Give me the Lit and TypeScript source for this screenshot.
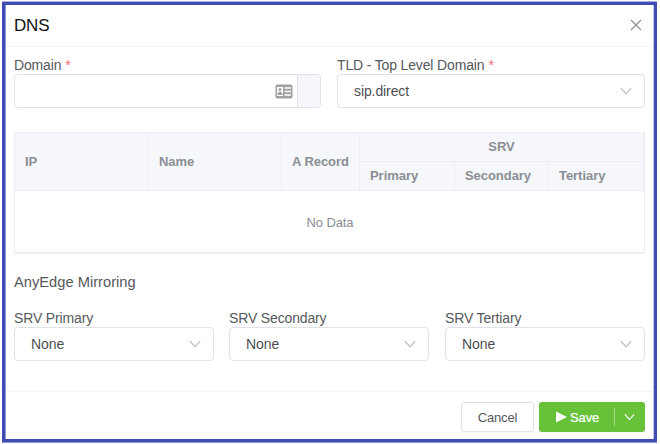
import { LitElement, html, css, svg } from "lit";
import { customElement, property } from "lit/decorators.js";

const chevron = (cls: string, width = 12) => html`<svg class=${cls} width=${width} height="8" viewBox="0 0 12 8">
  ${svg`<path d="M0.8 1.2 L6 6.6 L11.2 1.2" fill="none" stroke="currentColor" stroke-width="1.2"/>`}
</svg>`;

@customElement("select-field")
class SelectField extends LitElement {
  @property() label = "";
  @property() value = "";
  @property({ type: Boolean }) required = false;

  static styles = css`
    :host { display: block; min-width: 0; }
    .label { height: 18px; line-height: 18px; font-size: 14px; letter-spacing: -0.15px; color: #56585c; white-space: nowrap; }
    .star { color: #f56c6c; margin-left: 4px; }
    .box {
      box-sizing: border-box; height: 34px; display: flex; align-items: center;
      justify-content: space-between; padding: 0 12px 0 16px;
      border: 1px solid #dfe2e9; border-radius: 4px; background: #fff;
      font-size: 14px; letter-spacing: -0.1px; color: #4c4e52;
    }
    .arrow { color: #b9bdc6; }
  `;

  render() {
    return html`
      <div class="label">${this.label}${this.required ? html`<span class="star">*</span>` : ""}</div>
      <div class="box"><span>${this.value}</span>${chevron("arrow")}</div>
    `;
  }
}

@customElement("app-root")
class AppRoot extends LitElement {
  static styles = css`
    :host {
      display: block; box-sizing: border-box; width: 660px; height: 444px;
      padding: 2px 3px 2px 2px; background: #fff;
      font-family: "Liberation Sans", Arial, sans-serif; font-size: 14px; color: #56585c;
    }
    .dialog {
      box-sizing: border-box; width: 655px; height: 440px; border: 3px solid #3f4db5;
      box-shadow: 0 -1px #a9afdc, 0 1px #8f97d2, inset 1px 0 #8f97d2, inset -1px 0 #c5c9e8;
      display: flex; flex-direction: column;
    }
    .header {
      box-sizing: border-box; height: 42px; margin: 0 1px; padding: 0 11px 0 8px;
      border-bottom: 1px solid #ecf5fc; display: flex; align-items: center; justify-content: space-between;
    }
    .title { font-size: 17px; line-height: 20px; letter-spacing: -0.2px; color: #111; }
    .close { color: #8b8f96; margin-top: -2px; }
    .body { flex: 1; padding: 9px 10px 0 9px; }
    .row { display: grid; grid-template-columns: 307px 308px; column-gap: 16px; }
    .row.three { grid-template-columns: 200px 200px 200px; column-gap: 0; justify-content: start; }
    .row.three { grid-template-columns: 215px 216px 200px; }
    .row.three select-field { width: 200px; }
    .label { height: 18px; line-height: 18px; letter-spacing: -0.15px; white-space: nowrap; }
    .star { color: #f56c6c; margin-left: 4px; }
    .input {
      box-sizing: border-box; height: 34px; display: flex; border: 1px solid #dfe2e9;
      border-radius: 4px; overflow: hidden;
    }
    .entry { flex: 1; display: flex; align-items: center; justify-content: flex-end; padding-right: 4px; }
    .append { width: 22px; background: #f5f7fa; border-left: 1px solid #dfe2e9; }
    .table {
      margin-top: 24px; width: 631px; height: 122px; box-sizing: border-box;
      border: 1px solid #ebeef5; border-bottom-width: 2px; font-size: 13px; color: #8b8e94;
      display: grid; grid-template-rows: 29px 29px 1fr;
      grid-template-columns: 134px 133px 78px 95px 94px 1fr;
    }
    .th {
      box-sizing: border-box; background: #f5f7fa; border-right: 1px solid #ebeef5;
      border-bottom: 1px solid #ebeef5; padding: 0 0 1px 10px; font-weight: 700; letter-spacing: -0.05px;
      display: flex; align-items: center; white-space: nowrap;
    }
    .tall { grid-row: span 2; }
    .wide { grid-column: span 3; justify-content: center; padding: 0 0 1px; }
    .empty {
      grid-column: 1 / -1; display: flex; align-items: center; justify-content: center;
      padding: 1px 0 0 1px; letter-spacing: -0.1px;
    }
    .section { margin: 18px 0 17px; height: 20px; line-height: 20px; font-size: 14.7px; }
    .footer {
      box-sizing: border-box; height: 48px; margin: 0 1px; border-top: 1px solid #ecf5fc;
      padding: 10px 8px 0 0; display: flex; justify-content: flex-end; gap: 5px;
    }
    .cancel {
      box-sizing: border-box; width: 73px; height: 30px; border: 1px solid #dfe2e9; border-radius: 3px;
      display: flex; align-items: center; justify-content: center; font-size: 13px; letter-spacing: -0.15px;
    }
    .save {
      width: 106px; height: 30px; background: #67c23a; border-radius: 3px; color: #fff;
      display: flex; align-items: center; font-size: 13px;
    }
    .play { margin: 0 3px 0 17px; }
    .word { width: 29px; letter-spacing: -0.1px; -webkit-text-stroke: 0.2px #fff; }
    .split { width: 1px; height: 18px; background: #a9dc8f; margin-left: 15px; }
    .more { margin-left: 9px; }
  `;

  render() {
    return html`
      <div class="dialog">
        <div class="header">
          <div class="title">DNS</div>
          <svg class="close" width="12" height="12" viewBox="0 0 12 12">
            <path d="M1 1 L11 11 M11 1 L1 11" fill="none" stroke="currentColor" stroke-width="1.15"/>
          </svg>
        </div>
        <div class="body">
          <div class="row">
            <div>
              <div class="label">Domain<span class="star">*</span></div>
              <div class="input">
                <div class="entry">
                  <svg width="18" height="15" viewBox="0 0 18 15">
                    <rect x="0.5" y="0.5" width="17" height="14" rx="2" fill="#a0a0a0"/>
                    <rect x="2" y="3" width="6" height="9" fill="#fff"/>
                    <circle cx="5" cy="5.6" r="1.5" fill="#a0a0a0"/>
                    <path d="M2.6 11 V9.6 Q3 8 5 7.6 Q7 8 7.4 9.6 V11 Z" fill="#a0a0a0"/>
                    <path d="M9.5 4 H16 M9.5 7.5 H16 M9.5 11 H16" stroke="#fff" stroke-width="1.3"/>
                  </svg>
                </div>
                <div class="append"></div>
              </div>
            </div>
            <select-field label="TLD - Top Level Domain" value="sip.direct" required></select-field>
          </div>
          <div class="table">
            <div class="th tall">IP</div>
            <div class="th tall">Name</div>
            <div class="th tall">A Record</div>
            <div class="th wide">SRV</div>
            <div class="th">Primary</div>
            <div class="th">Secondary</div>
            <div class="th">Tertiary</div>
            <div class="empty">No Data</div>
          </div>
          <div class="section">AnyEdge Mirroring</div>
          <div class="row three">
            ${["SRV Primary", "SRV Secondary", "SRV Tertiary"].map(
              (l) => html`<select-field label=${l} value="None"></select-field>`
            )}
          </div>
        </div>
        <div class="footer">
          <div class="cancel">Cancel</div>
          <div class="save">
            <svg class="play" width="11" height="12" viewBox="0 0 11 12"><path d="M0 0.5 L11 6 L0 11.5 Z" fill="#fff"/></svg>
            <span class="word">Save</span>
            <span class="split"></span>
            ${chevron("more", 11)}
          </div>
        </div>
      </div>
    `;
  }
}
